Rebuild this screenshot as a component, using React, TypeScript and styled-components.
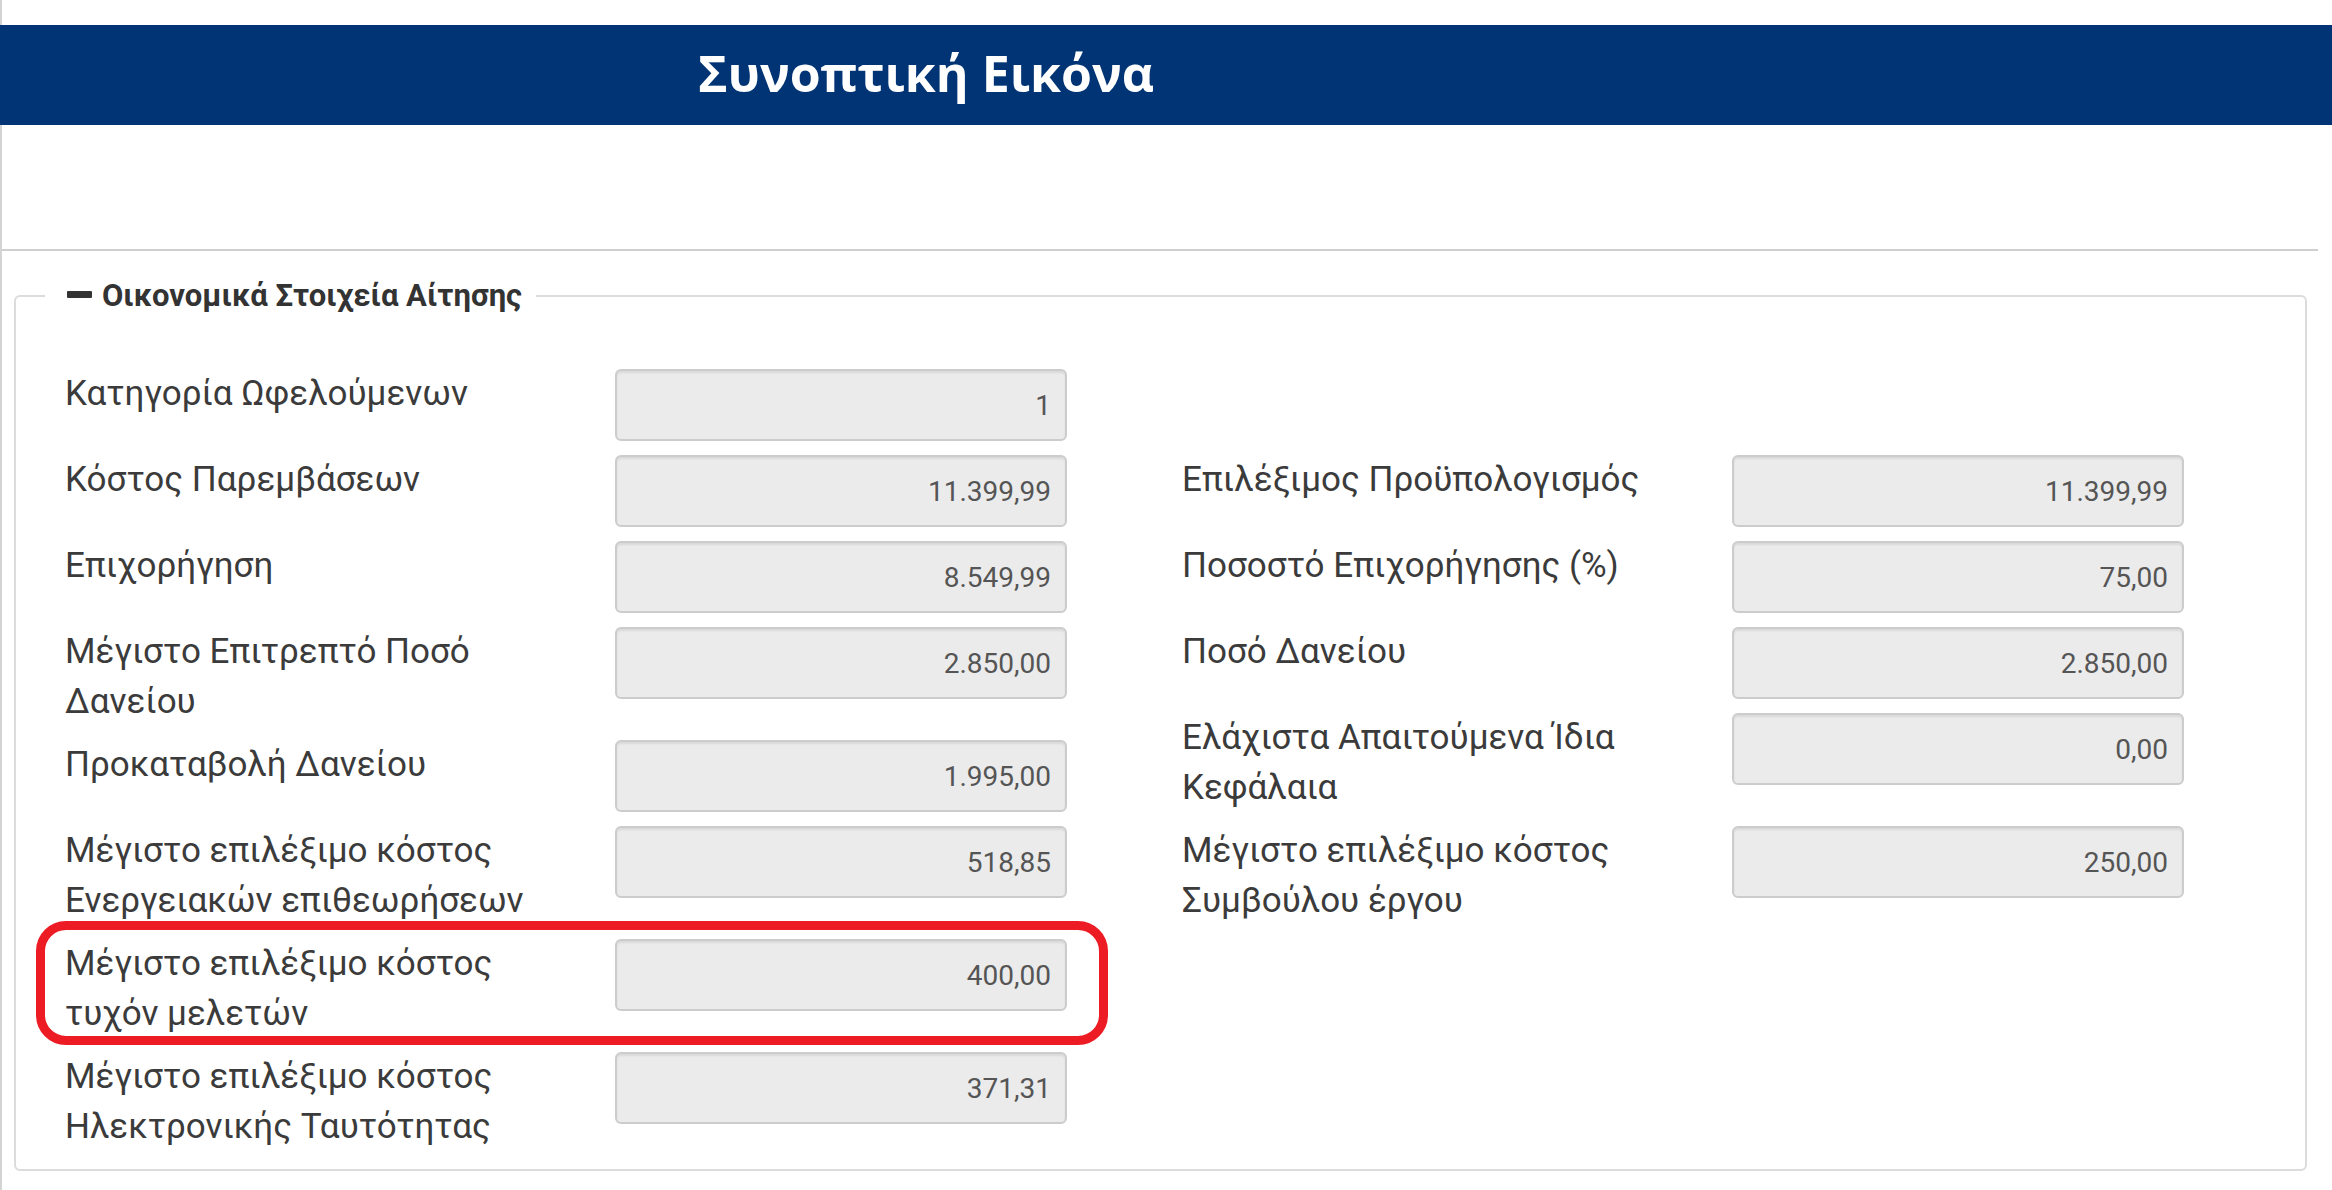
import React from "react";
import styled, { createGlobalStyle } from "styled-components";

const GlobalStyle = createGlobalStyle`
  html, body { margin: 0; padding: 0; background: #ffffff; }
  body { font-family: Roboto, "Noto Sans", "Liberation Sans", sans-serif; }
  * { box-sizing: border-box; }
`;

const Page = styled.div`
  min-height: 1190px;
  border-left: 2px solid #d4d4d4;
  padding-top: 25px;
`;

const Banner = styled.header`
  height: 100px;
  margin-left: -2px;
  background: #003474;
  display: flex;
  align-items: center;
  padding-left: 698px;
`;

const Title = styled.h1`
  margin: 0 0 4px;
  font-family: "Open Sans", "Noto Sans", sans-serif;
  font-weight: 700;
  font-size: 50px;
  line-height: 1;
  color: #ffffff;
`;

const Divider = styled.hr`
  margin: 124px 14px 0 0;
  height: 0;
  border: 0;
  border-top: 2px solid #cfcfcf;
`;

const Fieldset = styled.fieldset`
  margin: 24px 25px 0 12px;
  padding: 52px 0 18px 29px;
  border: 2px solid #dcdcdc;
  border-radius: 6px;
  min-width: 0;
`;

const Legend = styled.legend`
  padding: 0 14px 0 22px;
  font-family: Roboto, "Noto Sans", sans-serif;
  font-weight: 700;
  font-size: 31px;
  line-height: 42px;
  color: #333333;
`;

const MinusIcon = styled.span`
  display: inline-block;
  width: 25px;
  height: 7px;
  margin-right: 10px;
  border-radius: 1px;
  background: #333333;
  vertical-align: middle;
  position: relative;
  top: -3px;
`;

const Columns = styled.div`
  display: grid;
  grid-template-columns: 1000px 1000px;
  column-gap: 117px;
  padding-left: 22px;
  align-items: start;
`;

const Column = styled.div`
  display: flex;
  flex-direction: column;
  gap: 14px;
`;

const Row = styled.div`
  position: relative;
  display: grid;
  grid-template-columns: 548px 452px;
  align-items: start;
  min-height: 72px;
`;

const Spacer = styled.div`
  height: 72px;
`;

const Label = styled.div`
  margin-left: -2px;
  padding-right: 46px;
  font-size: 35px;
  line-height: 49.5px;
  color: #3b3b3b;
`;

const Field = styled.input`
  width: 452px;
  height: 72px;
  padding: 0 14px;
  border: 2px solid #cccccc;
  border-radius: 6px;
  background: #ebebeb;
  box-shadow: inset 0 2px 2px rgba(0, 0, 0, 0.08);
  font-family: Roboto, "Noto Sans", sans-serif;
  font-size: 28px;
  color: #555555;
  text-align: right;
  outline: none;
`;

const Highlight = styled.span`
  position: absolute;
  left: -31px;
  top: -18px;
  right: -41px;
  bottom: -7px;
  border: 9px solid #ed1c24;
  border-radius: 30px;
  pointer-events: none;
`;

type Item = { label: string; value: string; highlight?: boolean } | null;

const left: Item[] = [
  { label: "Κατηγορία Ωφελούμενων", value: "1" },
  { label: "Κόστος Παρεμβάσεων", value: "11.399,99" },
  { label: "Επιχορήγηση", value: "8.549,99" },
  { label: "Μέγιστο Επιτρεπτό Ποσό Δανείου", value: "2.850,00" },
  { label: "Προκαταβολή Δανείου", value: "1.995,00" },
  { label: "Μέγιστο επιλέξιμο κόστος Ενεργειακών επιθεωρήσεων", value: "518,85" },
  { label: "Μέγιστο επιλέξιμο κόστος τυχόν μελετών", value: "400,00", highlight: true },
  { label: "Μέγιστο επιλέξιμο κόστος Ηλεκτρονικής Ταυτότητας", value: "371,31" },
];

const right: Item[] = [
  null,
  { label: "Επιλέξιμος Προϋπολογισμός", value: "11.399,99" },
  { label: "Ποσοστό Επιχορήγησης (%)", value: "75,00" },
  { label: "Ποσό Δανείου", value: "2.850,00" },
  { label: "Ελάχιστα Απαιτούμενα Ίδια Κεφάλαια", value: "0,00" },
  { label: "Μέγιστο επιλέξιμο κόστος Συμβούλου έργου", value: "250,00" },
];

function FieldColumn({ items }: { items: Item[] }) {
  return (
    <Column>
      {items.map((it, i) =>
        it === null ? (
          <Spacer key={i} />
        ) : (
          <Row key={i}>
            <Label>{it.label}</Label>
            <Field readOnly value={it.value} />
            {it.highlight && <Highlight />}
          </Row>
        )
      )}
    </Column>
  );
}

export default function App() {
  return (
    <>
      <GlobalStyle />
      <Page>
        <Banner>
          <Title>Συνοπτική Εικόνα</Title>
        </Banner>
        <Divider />
        <Fieldset>
          <Legend>
            <MinusIcon />
            Οικονομικά Στοιχεία Αίτησης
          </Legend>
          <Columns>
            <FieldColumn items={left} />
            <FieldColumn items={right} />
          </Columns>
        </Fieldset>
      </Page>
    </>
  );
}
